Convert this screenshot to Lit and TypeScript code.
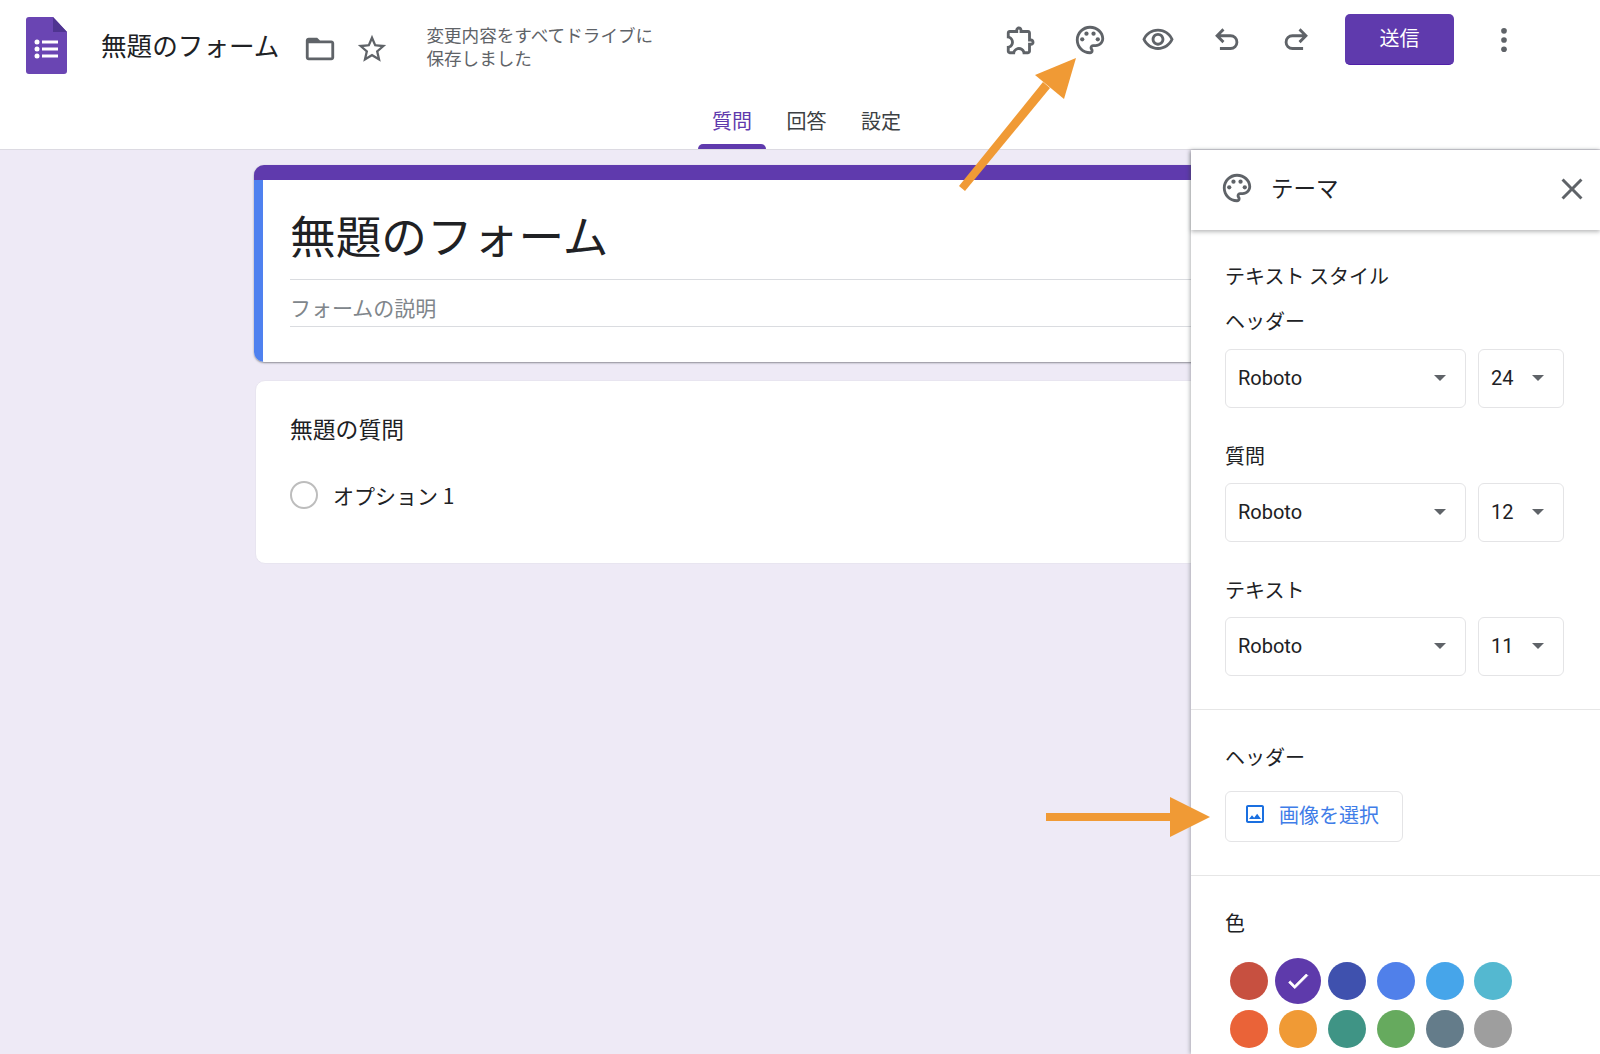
import { LitElement, html, css, svg } from 'lit';
import { customElement } from 'lit/decorators.js';

const PALETTE = svg`<path d="M12 22C6.49 22 2 17.51 2 12S6.49 2 12 2s10 4.04 10 9c0 3.31-2.69 6-6 6h-1.77c-.28 0-.5.22-.5.5 0 .12.05.23.13.33.41.47.64 1.06.64 1.67 0 1.38-1.12 2.5-2.5 2.5zm0-18c-4.41 0-8 3.59-8 8s3.59 8 8 8c.28 0 .5-.22.5-.5 0-.16-.08-.28-.14-.35-.41-.46-.63-1.05-.63-1.65 0-1.38 1.12-2.5 2.5-2.5H16c2.21 0 4-1.79 4-4 0-3.86-3.59-7-8-7z"/><circle cx="6.5" cy="11.5" r="1.5"/><circle cx="9.5" cy="7.5" r="1.5"/><circle cx="14.5" cy="7.5" r="1.5"/><circle cx="17.5" cy="11.5" r="1.5"/>`;

const icon = (body: unknown, size = 34) =>
  html`<svg class="icon" width=${size} height=${size} viewBox="0 0 24 24">${body}</svg>`;

const TOOLS = [
  svg`<path d="M10.5 4.5c.28 0 .5.22.5.5v2h6v6h2c.28 0 .5.22.5.5s-.22.5-.5.5h-2v6h-2.12c-.68-1.75-2.39-3-4.38-3s-3.7 1.25-4.38 3H4v-2.12c1.75-.68 3-2.39 3-4.38 0-1.99-1.24-3.7-2.99-4.38L4 7h6V5c0-.28.22-.5.5-.5zm0-2C9.12 2.5 8 3.62 8 5H4c-1.1 0-1.99.9-1.99 2v3.8h.29c1.49 0 2.7 1.21 2.7 2.7s-1.21 2.7-2.7 2.7H2V20c0 1.1.9 2 2 2h3.8v-.3c0-1.49 1.21-2.7 2.7-2.7s2.7 1.21 2.7 2.7v.3H17c1.1 0 2-.9 2-2v-4c1.38 0 2.5-1.12 2.5-2.5S20.38 11 19 11V7c0-1.1-.9-2-2-2h-4c0-1.38-1.12-2.5-2.5-2.5z"/>`,
  PALETTE,
  svg`<path d="M12 6c3.79 0 7.17 2.13 8.82 5.5C19.17 14.87 15.79 17 12 17s-7.17-2.13-8.82-5.5C4.83 8.13 8.21 6 12 6m0-2C7 4 2.73 7.11 1 11.5 2.73 15.89 7 19 12 19s9.27-3.11 11-7.5C21.27 7.11 17 4 12 4zm0 5c1.38 0 2.5 1.12 2.5 2.5S13.38 14 12 14s-2.5-1.12-2.5-2.5S10.62 9 12 9m0-2c-2.48 0-4.5 2.02-4.5 4.5S9.52 16 12 16s4.5-2.02 4.5-4.5S14.48 7 12 7z"/>`,
  svg`<path fill="none" stroke="currentColor" stroke-width="2" d="M9.5 4.5 5 9l4.500 4.500M5 9h9.500a4.500 4.500 0 0 1 0 9H7"/>`,
  svg`<path fill="none" stroke="currentColor" stroke-width="2" d="M14.500 4.500 19 9l-4.500 4.500M19 9H9.500a4.500 4.500 0 0 0 0 9H17"/>`,
];

const FONT_ROWS = [
  { label: 'ヘッダー', size: '24' },
  { label: '質問', size: '12' },
  { label: 'テキスト', size: '11' },
];

const SWATCHES = [
  '#c75040', '#5e3aab', '#3f51ae', '#5080ea', '#46a5ea', '#54b8d0',
  '#ea6338', '#f09a35', '#3f9485', '#66aa5e', '#647c8a', '#9e9e9e',
];

@customElement('app-root')
export class AppRoot extends LitElement {
  static styles = css`
    :host {
      display: flex;
      flex-direction: column;
      position: relative;
      height: 1054px;
      overflow: hidden;
      background: #eeeaf6;
      color: #202124;
      font-family: 'Noto Sans CJK JP', Roboto, sans-serif;
    }
    .icon {
      display: block;
      flex: none;
      fill: currentColor;
      color: #5f6368;
    }

    header {
      flex: none;
      height: 149px;
      background: #fff;
      border-bottom: 1px solid #dcdae2;
    }
    .top {
      display: flex;
      align-items: flex-start;
      height: 100px;
      padding-left: 26px;
    }
    .logo {
      margin-top: 17px;
    }
    .doc-title {
      margin: 27px 0 0 34px;
      font-size: 25.600px;
      line-height: 36px;
      white-space: nowrap;
    }
    .doc-icons {
      display: flex;
      align-items: center;
      gap: 18px;
      margin: 32px 0 0 24px;
    }
    .saved {
      margin: 24px 0 0 37px;
      font-size: 17.600px;
      line-height: 22.500px;
      color: #5f6368;
      white-space: nowrap;
    }
    .tools {
      display: flex;
      align-items: center;
      margin: 14px 0 0 auto;
      height: 51px;
    }
    .tool {
      display: flex;
      justify-content: center;
      width: 68.700px;
    }
    .send {
      width: 109px;
      height: 51px;
      margin-left: 15px;
      padding-bottom: 3px;
      box-sizing: border-box;
      display: flex;
      align-items: center;
      justify-content: center;
      border-radius: 5px;
      border-bottom: 1px solid #4f1fa8;
      background: #5f3aad;
      color: #fff;
      font-size: 20px;
    }
    .kebab {
      margin: 0 79px 0 33px;
    }

    .tabs {
      display: flex;
      gap: 6.500px;
      padding-left: 698px;
    }
    .tab {
      display: flex;
      flex-direction: column;
      height: 49px;
      padding: 0 14px;
      font-size: 20px;
      line-height: 42px;
      color: #3c4043;
    }
    .tab.active {
      color: #5f3aad;
    }
    .ink {
      height: 5px;
      margin: 2px -14px 0;
      border-radius: 5px 5px 0 0;
    }
    .tab.active .ink {
      background: #5f3aad;
    }

    main {
      flex: 1;
      display: flex;
      min-height: 0;
    }
    .canvas {
      flex: 1;
      min-width: 0;
      overflow: hidden;
      display: flex;
      flex-direction: column;
      gap: 18px;
      padding: 15px 0 0 254px;
    }
    .card {
      width: 1090px;
      background: #fff;
      border-radius: 10px;
      box-sizing: border-box;
      flex: none;
    }
    .title-card {
      overflow: hidden;
      height: 197px;
      border-top: 15px solid #5f3aad;
      box-shadow: 0 1px 2px rgba(60, 64, 67, 0.55);
    }
    .title-body {
      height: 100%;
      box-sizing: border-box;
      border-left: 9px solid #4f81ef;
      padding: 24px 0 0 27px;
    }
    .form-title {
      font-size: 45.700px;
      line-height: 60px;
      padding-bottom: 15px;
      border-bottom: 1px solid #dadce0;
    }
    .form-desc {
      margin-top: 13px;
      padding-bottom: 5px;
      font-size: 21px;
      line-height: 28px;
      color: #80868b;
      border-bottom: 1px solid #dadce0;
    }
    .question-card {
      height: 184px;
      margin-left: 1px;
      padding: 33px 0 0 34px;
      border: 1px solid #e8e5f0;
    }
    .question {
      font-size: 22.800px;
      line-height: 30px;
    }
    .option {
      display: flex;
      align-items: center;
      gap: 15px;
      margin-top: 36px;
      font-size: 21px;
    }
    .radio {
      width: 28px;
      height: 28px;
      box-sizing: border-box;
      border: 2.500px solid #bdbdbd;
      border-radius: 50%;
    }

    .panel {
      flex: none;
      width: 409px;
      display: flex;
      flex-direction: column;
      background: #fff;
      box-shadow: -1px 0 4px rgba(60, 64, 67, 0.4);
      position: relative;
    }
    .panel-head {
      flex: none;
      display: flex;
      align-items: center;
      gap: 17px;
      height: 76px;
      padding: 0 10px 4px 29px;
      box-shadow: 0 2px 4px rgba(60, 64, 67, 0.35);
      font-size: 22.500px;
    }
    .panel-head .title {
      margin-bottom: 2px;
    }
    .panel-head .close {
      margin: 2px 0 0 auto;
    }
    .section {
      padding: 33px 36px 33px 34px;
      border-bottom: 1px solid #e6e6e6;
    }
    .section:first-of-type {
      padding-top: 32px;
    }
    .section:last-child {
      border-bottom: none;
    }
    .heading,
    .label {
      font-size: 20px;
      line-height: 28px;
    }
    .field {
      margin-top: 34px;
    }
    .field.first {
      margin-top: 17px;
    }
    .selects {
      display: flex;
      gap: 12px;
      margin-top: 13px;
    }
    .field.first .selects {
      margin-top: 14px;
    }
    .select {
      flex: 1;
      height: 59px;
      box-sizing: border-box;
      display: flex;
      align-items: center;
      justify-content: space-between;
      padding: 0 19px 2px 12px;
      border: 1px solid #e4e4e6;
      border-radius: 6px;
      font-family: Roboto, sans-serif;
      font-size: 20px;
    }
    .select.size {
      flex: none;
      width: 86px;
    }
    .caret {
      width: 0;
      height: 0;
      border-left: 6px solid transparent;
      border-right: 6px solid transparent;
      border-top: 6px solid #5f6368;
    }
    .pick {
      display: inline-flex;
      align-items: center;
      gap: 12px;
      height: 51px;
      width: 178px;
      box-sizing: border-box;
      margin-top: 20px;
      padding: 0 0 5px 17px;
      border: 1px solid #e4e4e6;
      border-radius: 6px;
      color: #3f7de8;
      font-size: 20px;
    }
    .pick .icon {
      color: #1a6fe0;
    }
    .swatches {
      display: grid;
      grid-template-columns: repeat(6, 48.800px);
      grid-auto-rows: 48px;
      margin-top: 20px;
      place-items: center;
    }
    .swatch {
      width: 38px;
      height: 38px;
      border-radius: 50%;
      display: flex;
      align-items: center;
      justify-content: center;
    }
    .swatch.on {
      width: 46px;
      height: 46px;
    }
    .swatch .icon {
      color: #fff;
      stroke: #fff;
      stroke-width: 0.8;
    }

    .arrows {
      position: absolute;
      left: 0;
      top: 0;
      pointer-events: none;
    }
  `;

  protected render() {
    return html`
      <header>
        <div class="top">
          <svg class="logo" width="41" height="57" viewBox="0 0 41 57">
            <path fill="#6a45b3" d="M3 0h24l14 15v39a3 3 0 0 1-3 3H3a3 3 0 0 1-3-3V3a3 3 0 0 1 3-3z"/>
            <path fill="#4f3491" d="M27 0l14 15H27z"/>
            <g fill="#fff">
              <circle cx="11" cy="25" r="2.500"/>
              <circle cx="11" cy="32" r="2.500"/>
              <circle cx="11" cy="39" r="2.500"/>
              <rect x="16" y="23.500" width="16" height="3"/>
              <rect x="16" y="30.500" width="16" height="3"/>
              <rect x="16" y="37.500" width="16" height="3"/>
            </g>
          </svg>
          <div class="doc-title">無題のフォーム</div>
          <div class="doc-icons">
            ${icon(svg`<path d="M20 6h-8l-2-2H4c-1.100 0-1.990.900-1.990 2L2 18c0 1.100.900 2 2 2h16c1.100 0 2-.900 2-2V8c0-1.100-.900-2-2-2zm0 12H4V8h16v10z"/>`)}
            ${icon(svg`<path d="M22 9.240l-7.190-.620L12 2 9.190 8.630 2 9.240l5.460 4.730L5.820 21 12 17.270 18.180 21l-1.630-7.030L22 9.240zM12 15.400l-3.760 2.270 1-4.280-3.320-2.880 4.380-.380L12 6.100l1.710 4.040 4.380.380-3.320 2.880 1 4.280L12 15.400z"/>`)}
          </div>
          <div class="saved">変更内容をすべてドライブに<br />保存しました</div>
          <div class="tools">
            ${TOOLS.map((t) => html`<div class="tool">${icon(t)}</div>`)}
            <div class="send">送信</div>
            <div class="kebab">
              ${icon(svg`<circle cx="12" cy="5.500" r="2"/><circle cx="12" cy="12" r="2"/><circle cx="12" cy="18.500" r="2"/>`)}
            </div>
          </div>
        </div>
        <div class="tabs">
          <div class="tab active">質問<span class="ink"></span></div>
          <div class="tab">回答<span class="ink"></span></div>
          <div class="tab">設定<span class="ink"></span></div>
        </div>
      </header>
      <main>
        <div class="canvas">
          <div class="card title-card">
            <div class="title-body">
              <div class="form-title">無題のフォーム</div>
              <div class="form-desc">フォームの説明</div>
            </div>
          </div>
          <div class="card question-card">
            <div class="question">無題の質問</div>
            <div class="option"><span class="radio"></span>オプション 1</div>
          </div>
        </div>
        <aside class="panel">
          <div class="panel-head">
            ${icon(PALETTE)}
            <span class="title">テーマ</span>
            <span class="close">
              ${icon(svg`<path d="M19 6.410L17.590 5 12 10.590 6.410 5 5 6.410 10.590 12 5 17.590 6.410 19 12 13.410 17.590 19 19 17.590 13.410 12z"/>`, 36)}
            </span>
          </div>
          <section class="section">
            <div class="heading">テキスト スタイル</div>
            ${FONT_ROWS.map(
              (r, i) => html`
                <div class="field ${i === 0 ? 'first' : ''}">
                  <div class="label">${r.label}</div>
                  <div class="selects">
                    <div class="select"><span>Roboto</span><span class="caret"></span></div>
                    <div class="select size"><span>${r.size}</span><span class="caret"></span></div>
                  </div>
                </div>
              `
            )}
          </section>
          <section class="section">
            <div class="label">ヘッダー</div>
            <div class="pick">
              ${icon(svg`<path d="M19 5v14H5V5h14m0-2H5c-1.100 0-2 .900-2 2v14c0 1.100.900 2 2 2h14c1.100 0 2-.900 2-2V5c0-1.100-.900-2-2-2zm-4.860 8.860l-3 3.870L9 13.140 6 17h12l-3.860-5.140z"/>`, 24)}
              <span>画像を選択</span>
            </div>
          </section>
          <section class="section">
            <div class="label">色</div>
            <div class="swatches">
              ${SWATCHES.map(
                (c, i) => html`
                  <div class="swatch ${i === 1 ? 'on' : ''}" style="background:${c}">
                    ${i === 1
                      ? icon(svg`<path d="M9 16.170L4.830 12l-1.420 1.410L9 19 21 7l-1.410-1.410z"/>`, 26)
                      : ''}
                  </div>
                `
              )}
            </div>
          </section>
        </aside>
      </main>
      <svg class="arrows" width="1600" height="1054" viewBox="0 0 1600 1054">
        <g fill="#f09a35">
          <path d="M959 186l6 5 85-103-7-6z"/>
          <path d="M1076 58l-41 17 29 24z"/>
          <rect x="1046" y="813" width="124" height="8"/>
          <path d="M1170 797l40 20-40 20z"/>
        </g>
      </svg>
    `;
  }
}
